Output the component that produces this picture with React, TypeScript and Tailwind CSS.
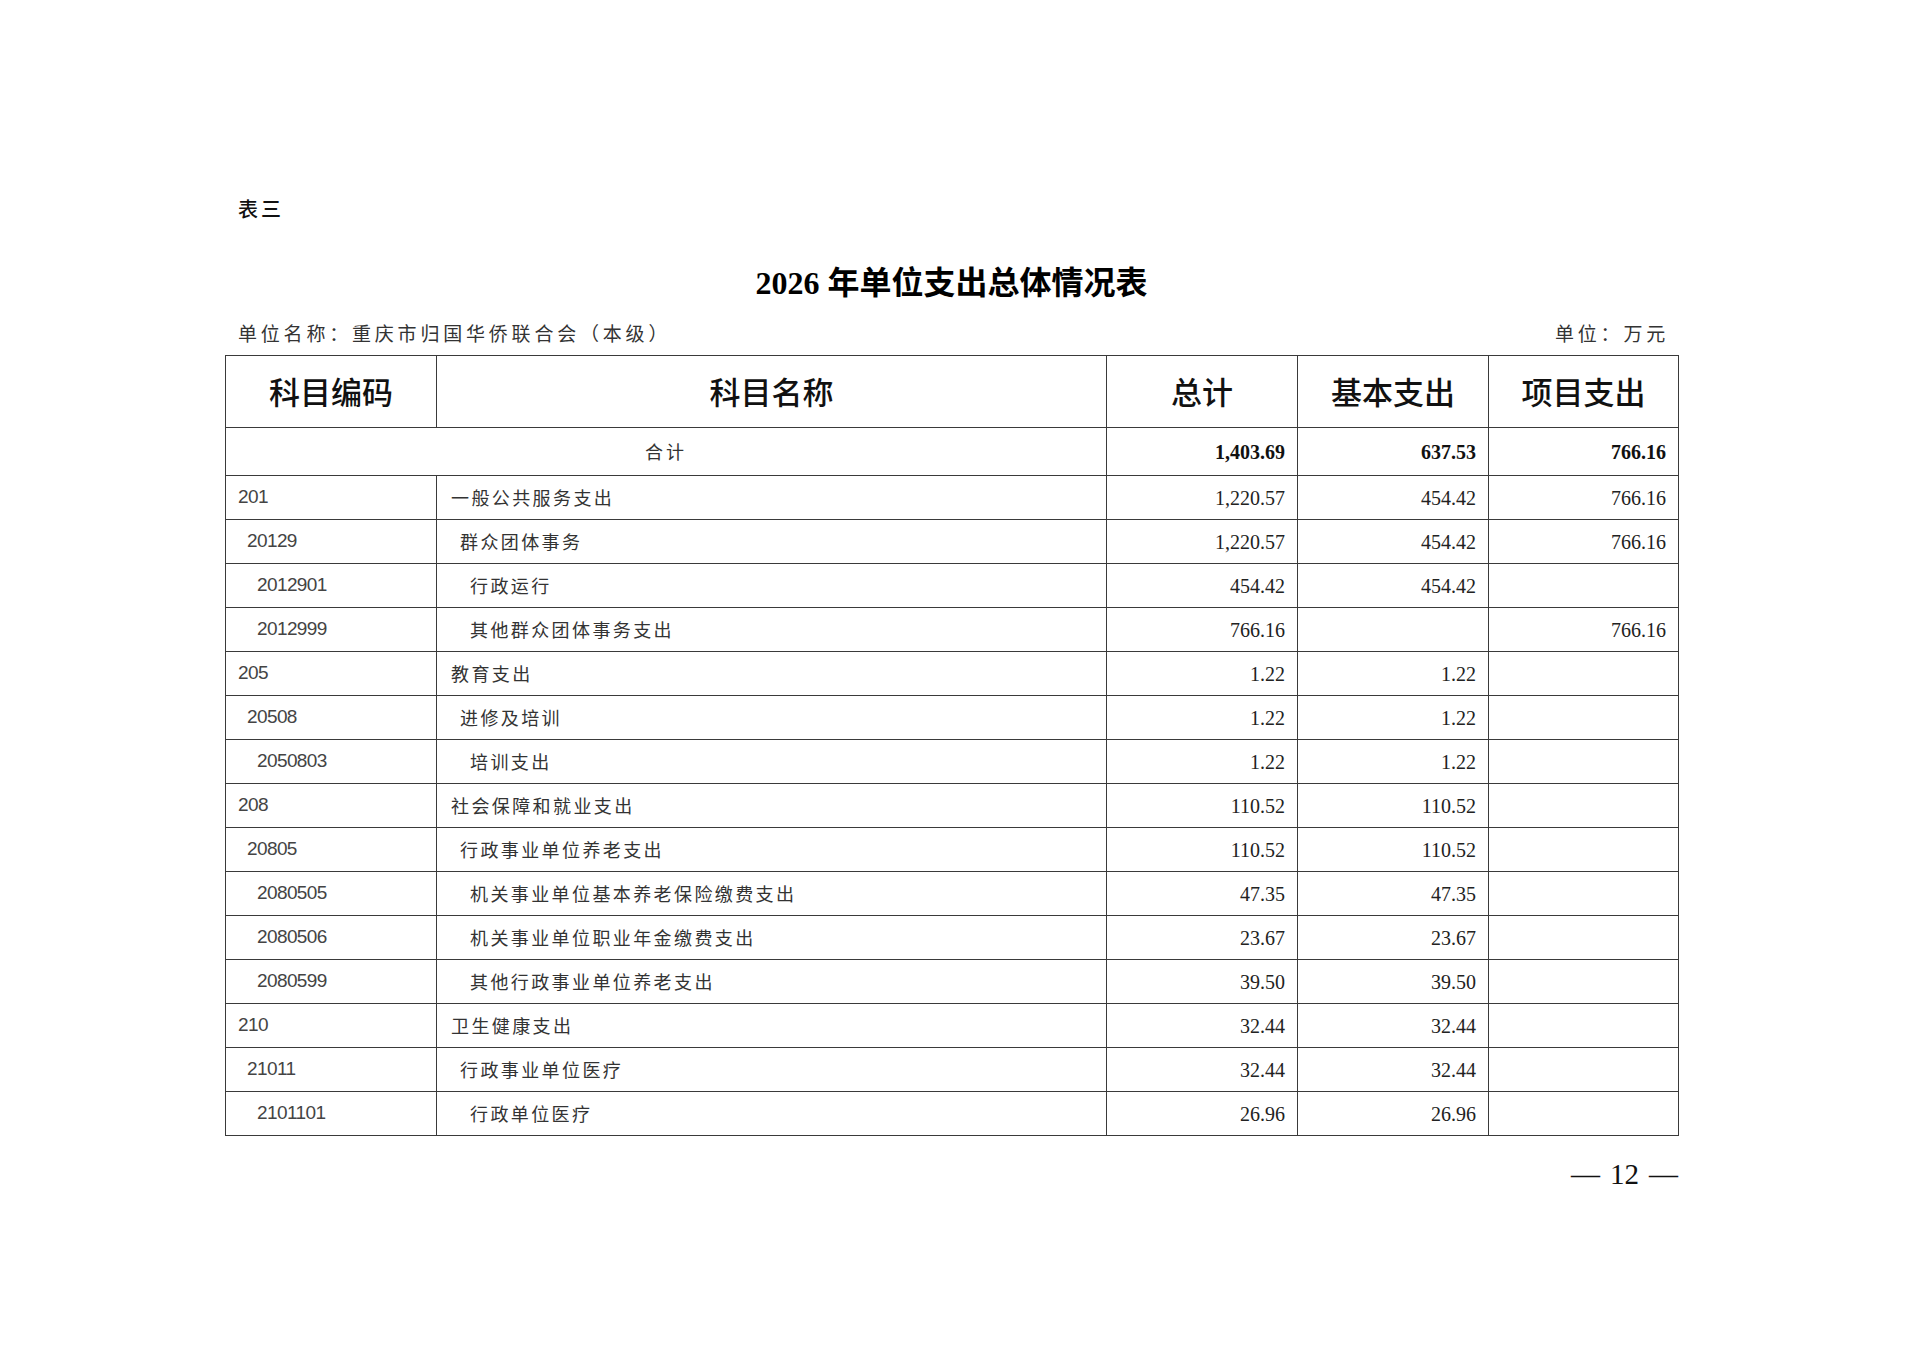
import React from 'react';

type Row = {
  code: string;
  name: string;
  level: 1 | 2 | 3;
  total: string;
  basic: string;
  project: string;
};

const rows: Row[] = [
  { code: '201', name: '一般公共服务支出', level: 1, total: '1,220.57', basic: '454.42', project: '766.16' },
  { code: '20129', name: '群众团体事务', level: 2, total: '1,220.57', basic: '454.42', project: '766.16' },
  { code: '2012901', name: '行政运行', level: 3, total: '454.42', basic: '454.42', project: '' },
  { code: '2012999', name: '其他群众团体事务支出', level: 3, total: '766.16', basic: '', project: '766.16' },
  { code: '205', name: '教育支出', level: 1, total: '1.22', basic: '1.22', project: '' },
  { code: '20508', name: '进修及培训', level: 2, total: '1.22', basic: '1.22', project: '' },
  { code: '2050803', name: '培训支出', level: 3, total: '1.22', basic: '1.22', project: '' },
  { code: '208', name: '社会保障和就业支出', level: 1, total: '110.52', basic: '110.52', project: '' },
  { code: '20805', name: '行政事业单位养老支出', level: 2, total: '110.52', basic: '110.52', project: '' },
  { code: '2080505', name: '机关事业单位基本养老保险缴费支出', level: 3, total: '47.35', basic: '47.35', project: '' },
  { code: '2080506', name: '机关事业单位职业年金缴费支出', level: 3, total: '23.67', basic: '23.67', project: '' },
  { code: '2080599', name: '其他行政事业单位养老支出', level: 3, total: '39.50', basic: '39.50', project: '' },
  { code: '210', name: '卫生健康支出', level: 1, total: '32.44', basic: '32.44', project: '' },
  { code: '21011', name: '行政事业单位医疗', level: 2, total: '32.44', basic: '32.44', project: '' },
  { code: '2101101', name: '行政单位医疗', level: 3, total: '26.96', basic: '26.96', project: '' },
];

const codePad = { 1: 'pl-[12px]', 2: 'pl-[21px]', 3: 'pl-[31px]' } as const;
const namePad = { 1: 'pl-[14px]', 2: 'pl-[23px]', 3: 'pl-[33px]' } as const;

const cjk = "font-['Noto_Sans_CJK_SC','Noto_Sans',sans-serif]";
const serif = "font-['Liberation_Serif','Times_New_Roman',serif]";
const sans = "font-['Liberation_Sans',Arial,sans-serif]";

const cell = 'border border-[#3a3a3a] p-0';

export default function App() {
  return (
    <div className="w-[1920px] h-[1357px] bg-white overflow-hidden">
      <div className="w-[1453px] ml-[225px] pt-[195px]">
        <div className={`${cjk} h-[28px] leading-[28px] pl-[13px] text-[20px] font-medium text-[#111] tracking-[3px]`}>
          表三
        </div>

        <h1 className={`mt-[37px] h-[40px] leading-[40px] text-center text-[32px] font-bold text-black ${serif}`}>
          2026 <span className={cjk}>年单位支出总体情况表</span>
        </h1>

        <div className={`${cjk} mt-[19px] h-[28px] leading-[28px] px-[13px] flex justify-between text-[19px] text-[#333] tracking-[3.8px]`}>
          <span>单位名称：重庆市归国华侨联合会（本级）</span>
          <span className="mr-[-4px]">单位：万元</span>
        </div>

        <table className="mt-[8px] w-[1453px] table-fixed border-collapse">
          <colgroup>
            <col className="w-[211px]" />
            <col className="w-[670px]" />
            <col className="w-[191px]" />
            <col className="w-[191px]" />
            <col className="w-[190px]" />
          </colgroup>
          <thead>
            <tr className="h-[72px]">
              {['科目编码', '科目名称', '总计', '基本支出', '项目支出'].map((h) => (
                <th key={h} className={`${cell} ${cjk} text-center align-middle text-[31px] font-medium text-[#111]`}>
                  {h}
                </th>
              ))}
            </tr>
          </thead>
          <tbody>
            <tr className="h-[48px]">
              <td colSpan={2} className={`${cell} ${cjk} text-center text-[18px] text-[#333] tracking-[3px]`}>
                合计
              </td>
              <td className={`${cell} ${serif} text-right pr-[12px] text-[20px] font-bold text-[#111]`}>1,403.69</td>
              <td className={`${cell} ${serif} text-right pr-[12px] text-[20px] font-bold text-[#111]`}>637.53</td>
              <td className={`${cell} ${serif} text-right pr-[12px] text-[20px] font-bold text-[#111]`}>766.16</td>
            </tr>
            {rows.map((r) => (
              <tr key={r.code} className="h-[44px]">
                <td className={`${cell} ${sans} ${codePad[r.level]} text-[19px] tracking-[-0.6px] text-[#444]`}>
                  {r.code}
                </td>
                <td className={`${cell} ${cjk} ${namePad[r.level]} text-[18px] tracking-[2.4px] text-[#333]`}>
                  {r.name}
                </td>
                <td className={`${cell} ${serif} text-right pr-[12px] text-[20px] text-[#222]`}>{r.total}</td>
                <td className={`${cell} ${serif} text-right pr-[12px] text-[20px] text-[#222]`}>{r.basic}</td>
                <td className={`${cell} ${serif} text-right pr-[12px] text-[20px] text-[#222]`}>{r.project}</td>
              </tr>
            ))}
          </tbody>
        </table>

        <div className={`${serif} mt-[20px] flex justify-end items-center gap-[10px] text-[29px] leading-[36px] text-[#111]`}>
          <span>—</span>
          <span>12</span>
          <span>—</span>
        </div>
      </div>
    </div>
  );
}
